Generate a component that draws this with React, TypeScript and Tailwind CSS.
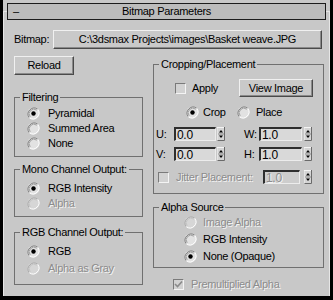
import React from "react";

const DIS = "text-[#8c8c8c] [text-shadow:1px_1px_0_#f4f4f4]";

function Radio({ checked = false, disabled = false }: { checked?: boolean; disabled?: boolean }) {
  return (
    <svg width="13" height="13" viewBox="0 0 13 13" className="shrink-0">
      <circle cx="6.5" cy="6.5" r="6" fill={disabled ? "#d6d6d6" : "#e2e2e2"} />
      <path d="M2.3 10.7 A6 6 0 0 1 10.7 2.3" fill="none" stroke={disabled ? "#a8a8a8" : "#7c7c7c"} strokeWidth="1" />
      <path d="M3.2 9.8 A4.7 4.7 0 0 1 9.8 3.2" fill="none" stroke={disabled ? "#c4c4c4" : "#a0a0a0"} strokeWidth="1" />
      <path d="M10.7 2.3 A6 6 0 0 1 2.3 10.7" fill="none" stroke="#ffffff" strokeWidth="1" />
      {checked && <circle cx="6.5" cy="6.5" r="2.2" fill={disabled ? "#808080" : "#000000"} />}
    </svg>
  );
}

function Check({ checked = false, disabled = false }: { checked?: boolean; disabled?: boolean }) {
  return (
    <div className="w-[11px] h-[11px] shrink-0 border-t border-l border-t-[#7a7a7a] border-l-[#7a7a7a] border-b border-r border-b-[#f4f4f4] border-r-[#f4f4f4] bg-[#d2d2d2] flex items-center justify-center">
      {checked && (
        <svg width="9" height="9" viewBox="0 0 9 9">
          <path d="M1 4 L3.5 6.5 L8 1.5" fill="none" stroke={disabled ? "#8a8a8a" : "#000"} strokeWidth="1.6" />
        </svg>
      )}
    </div>
  );
}

function Spin() {
  return (
    <svg width="8" height="14" viewBox="0 0 8 14" className="shrink-0">
      <rect x="0" y="0" width="8" height="14" fill="#d4d4d4" />
      <path d="M0 13.5 V0.5 H7.5" fill="none" stroke="#f4f4f4" />
      <path d="M0.5 13.5 H7.5 V0" fill="none" stroke="#6a6a6a" />
      <line x1="1" y1="7" x2="7" y2="7" stroke="#8a8a8a" />
      <path d="M2 5.5 L4 3 L6 5.5 Z" fill="#000" />
      <path d="M2 8.5 L6 8.5 L4 11 Z" fill="#000" />
    </svg>
  );
}

function Field({ value, w, disabled = false }: { value: string; w: string; disabled?: boolean }) {
  return (
    <div
      className={`${w} h-[14px] shrink-0 border-t-2 border-l-2 border-t-[#2e2e2e] border-l-[#2e2e2e] border-b border-r border-b-[#ececec] border-r-[#ececec] ${disabled ? "bg-[#cdcdcd]" : "bg-[#d9d9d9]"} flex items-center pl-[1px] leading-[12px] text-[12px] ${disabled ? DIS : "text-black"}`}
    >
      {value}
    </div>
  );
}

function Button({ className, children }: { className: string; children: React.ReactNode }) {
  return (
    <div
      className={`${className} shrink-0 flex items-center justify-center whitespace-nowrap bg-[#c9c9c9] border border-t-[#f0f0f0] border-l-[#f0f0f0] border-b-[#4a4a4a] border-r-[#4a4a4a] shadow-[inset_-1px_-1px_0_#8a8a8a] leading-[13px]`}
    >
      {children}
    </div>
  );
}

function Group({ title, className, children }: { title: string; className: string; children: React.ReactNode }) {
  return (
    <fieldset className={`border border-[#707070] ${className}`}>
      <legend className="ml-[5px] px-[2px] leading-[13px] whitespace-nowrap">{title}</legend>
      {children}
    </fieldset>
  );
}

function RadioRow({ label, checked = false, disabled = false, h, gap }: { label: string; checked?: boolean; disabled?: boolean; h: string; gap: string }) {
  return (
    <div className={`${h} flex items-center ${gap}`}>
      <Radio checked={checked} disabled={disabled} />
      <span className={`leading-[13px] whitespace-nowrap ${disabled ? DIS : ""}`}>{label}</span>
    </div>
  );
}

export default function App() {
  return (
    <div className="w-[333px] h-[300px] bg-black pl-[3px] pr-[3px] pb-[4px] flex flex-col font-['Liberation_Sans',Arial,sans-serif] text-[11px] tracking-[-0.3px] text-black">
      <div className="flex-1 bg-[#c8c8c8] pt-[11px] flex flex-col">
        <div className="flex-1 border-t border-l border-r border-t-[#e6e6e6] border-l-[#e6e6e6] border-r-[#e6e6e6] flex flex-col">
          {/* Title bar */}
          <div className="-mt-[9px] mx-[3px] h-[17px] border border-[#1c1c1c] bg-[#bcbcbc] flex items-center leading-[13px]">
            <div className="w-[24px] pl-[5px]">–</div>
            <div className="flex-1 text-center">Bitmap Parameters</div>
            <div className="w-[24px]" />
          </div>

          {/* Bitmap row */}
          <div className="mt-[10px] pl-[10px] flex items-center">
            <div className="w-[39px] leading-[13px]">Bitmap:</div>
            <Button className="w-[269px] h-[19px]">C:\3dsmax Projects\images\Basket weave.JPG</Button>
          </div>

          {/* Columns */}
          <div className="mt-[7px] flex">
            {/* Left column */}
            <div className="ml-[10px] w-[129px] flex flex-col">
              <Button className="w-[60px] h-[19px]">Reload</Button>

              <Group title="Filtering" className="mt-[16px] pb-[5px]">
                <div className="pt-[2px] pl-[12px] flex flex-col">
                  <RadioRow label="Pyramidal" checked h="h-[15px]" gap="gap-[8px]" />
                  <RadioRow label="Summed Area" h="h-[15px]" gap="gap-[8px]" />
                  <RadioRow label="None" h="h-[15px]" gap="gap-[8px]" />
                </div>
              </Group>

              <Group title="Mono Channel Output:" className="mt-[6px] pb-[5px]">
                <div className="pt-[5px] pl-[12px] flex flex-col">
                  <RadioRow label="RGB Intensity" checked h="h-[15px]" gap="gap-[8px]" />
                  <RadioRow label="Alpha" disabled h="h-[15px]" gap="gap-[8px]" />
                </div>
              </Group>

              <Group title="RGB Channel Output:" className="mt-[9px] pb-[7px]">
                <div className="pt-[4px] pl-[12px] flex flex-col">
                  <RadioRow label="RGB" checked h="h-[17px]" gap="gap-[8px]" />
                  <RadioRow label="Alpha as Gray" disabled h="h-[17px]" gap="gap-[8px]" />
                </div>
              </Group>
            </div>

            {/* Right column */}
            <div className="ml-[10px] w-[171px] flex flex-col">
              <Group title="Cropping/Placement" className="mt-[2px] pb-[9px]">
                <div className="flex flex-col">
                  <div className="mt-[8px] h-[18px] flex items-center">
                    <div className="ml-[21px] w-[64px] flex items-center gap-[6px]">
                      <Check />
                      <span className="leading-[13px]">Apply</span>
                    </div>
                    <Button className="w-[74px] h-[18px]">View Image</Button>
                  </div>

                  <div className="mt-[8px] h-[15px] flex items-center">
                    <div className="ml-[32px] w-[51px] flex items-center gap-[4px]">
                      <Radio checked />
                      <span className="leading-[13px]">Crop</span>
                    </div>
                    <div className="flex items-center gap-[6px]">
                      <Radio />
                      <span className="leading-[13px]">Place</span>
                    </div>
                  </div>

                  <div className="mt-[7px] h-[14px] flex items-center">
                    <div className="ml-[2px] w-[18px] leading-[13px]">U:</div>
                    <Field value="0.0" w="w-[42px]" />
                    <div className="ml-[1px]"><Spin /></div>
                    <div className="ml-[19px] w-[15px] leading-[13px]">W:</div>
                    <Field value="1.0" w="w-[43px]" />
                    <div className="ml-[2px]"><Spin /></div>
                  </div>

                  <div className="mt-[6px] h-[14px] flex items-center">
                    <div className="ml-[2px] w-[18px] leading-[13px]">V:</div>
                    <Field value="0.0" w="w-[42px]" />
                    <div className="ml-[1px]"><Spin /></div>
                    <div className="ml-[19px] w-[15px] leading-[13px]">H:</div>
                    <Field value="1.0" w="w-[43px]" />
                    <div className="ml-[2px]"><Spin /></div>
                  </div>

                  <div className="mt-[9px] h-[14px] flex items-center">
                    <div className="ml-[4px] w-[105px] flex items-center gap-[7px]">
                      <Check disabled />
                      <span className={`leading-[13px] whitespace-nowrap ${DIS}`}>Jitter Placement:</span>
                    </div>
                    <Field value="1.0" w="w-[37px]" disabled />
                    <div className="ml-[4px]"><Spin /></div>
                  </div>
                </div>
              </Group>

              <Group title="Alpha Source" className="mt-[7px] pb-[2px]">
                <div className="pl-[30px] flex flex-col">
                  <RadioRow label="Image Alpha" disabled h="h-[17px]" gap="gap-[6px]" />
                  <RadioRow label="RGB Intensity" h="h-[17px]" gap="gap-[6px]" />
                  <RadioRow label="None (Opaque)" checked h="h-[17px]" gap="gap-[6px]" />
                </div>
              </Group>

              <div className="mt-[10px] ml-[20px] flex items-center gap-[7px]">
                <Check checked disabled />
                <span className={`leading-[13px] whitespace-nowrap ${DIS}`}>Premultiplied Alpha</span>
              </div>
            </div>
          </div>
        </div>
      </div>
    </div>
  );
}
